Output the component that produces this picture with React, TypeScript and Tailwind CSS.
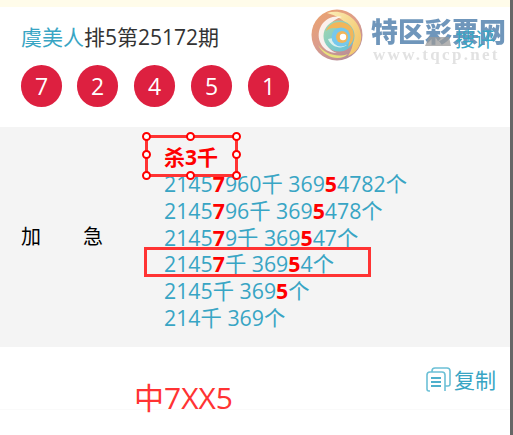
function Logo() {
  return (
    <div className="absolute left-[311px] top-[9px] w-[195px] h-[56px] pointer-events-none blur-[0.4px]">
      <svg width="52" height="52" viewBox="0 0 52 52" className="absolute left-0 top-0">
        <defs>
          <linearGradient id="lg1" x1="0" y1="0" x2="0.6" y2="1">
            <stop offset="0" stopColor="#eda36a" />
            <stop offset="0.55" stopColor="#dc9d8c" />
            <stop offset="1" stopColor="#b88f98" />
          </linearGradient>
          <linearGradient id="lg2" x1="0" y1="0" x2="1" y2="0.7">
            <stop offset="0" stopColor="#fbeeb8" />
            <stop offset="1" stopColor="#f3c76c" />
          </linearGradient>
          <linearGradient id="lg3" x1="0" y1="0" x2="1" y2="1">
            <stop offset="0" stopColor="#a9d8a8" />
            <stop offset="1" stopColor="#5fbfe0" />
          </linearGradient>
        </defs>
        <circle cx="26" cy="26" r="25.5" fill="url(#lg1)" />
        <path d="M16 4 C30 -1 48 8 50 26 C51 36 45 44 37 47 C43 38 44 28 39 19 C34 11 24 6 16 4Z" fill="url(#lg2)" />
        <path d="M7 36 C14 45 26 49 37 45 C30 52 14 50 7 36Z" fill="#e8e27c" />
        <path d="M9 33 C4 20 14 5 31 8 C21 10 13 20 15 32 C16 38 20 42 26 44 C18 44 12 40 9 33Z" fill="#ffffff" opacity="0.85" />
        <circle cx="28" cy="27" r="15.5" fill="url(#lg3)" />
        <path d="M15 22 C18 13 30 10 38 16 C45 22 44 33 37 38 C40 30 37 22 29 20 C23 18 18 19 15 22Z" fill="#f2b65a" />
        <path d="M17 30 C20 38 30 41 36 36 C30 37 24 34 22 29Z" fill="#ffffff" opacity="0.7" />
        <circle cx="30" cy="28" r="9.5" fill="#76c8ec" />
        <circle cx="31" cy="28" r="6" fill="#f0b65a" />
        <circle cx="32" cy="28" r="3.2" fill="#ffffff" />
      </svg>
      <div className="absolute left-[60px] top-[7px] text-[27px] leading-[30px] font-black text-[#6f96bb] whitespace-nowrap font-['Noto_Sans_CJK_SC',sans-serif]">
        特区彩票网
      </div>
      <svg width="26" height="9" viewBox="0 0 26 9" className="absolute left-[114px] top-[28px]">
        <polygon points="4,0 24,0 26,9 0,9" fill="#9a9a9a" opacity="0.75" />
      </svg>
      <div className="absolute left-[62px] top-[37px] text-[17px] leading-[18px] font-bold tracking-[2.3px] text-[#e2e2e2] whitespace-nowrap font-['Liberation_Serif',serif]">
        www.tqcp.net
      </div>
    </div>
  );
}

function Ball({ n, extra }: { n: number; extra?: string }) {
  return (
    <div className={`w-[41px] h-[42px] rounded-full bg-[#dd2040] text-white flex items-center justify-center text-[23px] leading-none ${extra ?? ""}`}>
      {n}
    </div>
  );
}

function Line({ a, r1, b, c, r2, d }: { a: string; r1?: string; b?: string; c: string; r2?: string; d?: string }) {
  return (
    <div className="h-[26.8px] leading-[26.8px] whitespace-nowrap">
      {a}
      {r1 && <b className="text-[#ff0000]">{r1}</b>}
      {b}千 {c}
      {r2 && <b className="text-[#ff0000]">{r2}</b>}
      {d}个
    </div>
  );
}

export default function App() {
  return (
    <div className="relative w-[513px] h-[435px] overflow-hidden bg-white font-['Open_Sans','Noto_Sans_CJK_SC',sans-serif]">
      <div className="h-[7px] bg-[#fffcea]" />
      <div className="pl-[21px] pt-[16px] h-[120px]">
        <div className="h-[29px] leading-[29px] text-[21px] text-[#333333] whitespace-nowrap">
          <span className="text-[#38a5c4]">虞美人</span>排5第25172期
        </div>
        <div className="flex gap-[16px] mt-[13px]">
          <Ball n={7} extra="-mr-px" />
          <Ball n={2} />
          <Ball n={4} />
          <Ball n={5} />
          <Ball n={1} />
        </div>
      </div>
      <div className="h-[220px] bg-[#f4f4f4] flex">
        <div className="w-[143px] flex items-center pl-[21px] gap-[42px] text-black text-[20px]">
          <span>加</span>
          <span>急</span>
        </div>
        <div className="pl-[21px] pt-[17px] text-[#38a5c4] text-[21.3px]">
          <div className="h-[27px] leading-[27px] font-bold text-[#ff0000] text-[21px]">杀3千</div>
          <Line a="2145" r1="7" b="960" c="369" r2="5" d="4782" />
          <Line a="2145" r1="7" b="96" c="369" r2="5" d="478" />
          <Line a="2145" r1="7" b="9" c="369" r2="5" d="47" />
          <Line a="2145" r1="7" c="369" r2="5" d="4" />
          <Line a="2145" c="369" r2="5" />
          <Line a="214" c="369" />
        </div>
      </div>
      <div className="h-[63px] border-b border-[#fafafa] flex justify-between pl-[134px] pr-[17px]">
        <div className="pt-[33px] text-[30px] leading-[36px] text-[#ff3333]">中7XX5</div>
        <div className="pt-[20px] flex items-start text-[#38a5c4] text-[21px] leading-[26px]">
          <svg width="25" height="26" viewBox="0 0 25 26" fill="none" stroke="#6cc0d6" strokeWidth="1.6">
            <path d="M4 24 H3 a2 2 0 0 1 -2 -2 V8 a3 3 0 0 1 3 -3 H16 a3 3 0 0 1 3 3 V24" />
            <path d="M6 5 V4 a3 3 0 0 1 3 -3 H21 a3 3 0 0 1 3 3 V17 a2 2 0 0 1 -2 2 H19" />
            <path d="M5 11 H15 M5 15 H15 M5 19 H15" strokeWidth="2" stroke="#4fb0cc" />
          </svg>
          <span className="ml-[3px]">复制</span>
        </div>
      </div>

      <Logo />
      <div className="absolute left-[455px] top-[26px] text-[20px] leading-[28px] text-[#38a5c4] whitespace-nowrap">搜评</div>

      <div className="absolute left-[145px] top-[135px] w-[93px] h-[42px] border-[3px] border-[#ff3333]">
        <span className="absolute -left-[6px] -top-[6px] w-[9px] h-[9px] rounded-full bg-white border-2 border-[#ff0000]" />
        <span className="absolute left-[38px] -top-[6px] w-[9px] h-[9px] rounded-full bg-white border-2 border-[#ff0000]" />
        <span className="absolute -right-[6px] -top-[6px] w-[9px] h-[9px] rounded-full bg-white border-2 border-[#ff0000]" />
        <span className="absolute -left-[6px] top-[12px] w-[9px] h-[9px] rounded-full bg-white border-2 border-[#ff0000]" />
        <span className="absolute -right-[6px] top-[12px] w-[9px] h-[9px] rounded-full bg-white border-2 border-[#ff0000]" />
        <span className="absolute -left-[6px] -bottom-[6px] w-[9px] h-[9px] rounded-full bg-white border-2 border-[#ff0000]" />
        <span className="absolute left-[38px] -bottom-[6px] w-[9px] h-[9px] rounded-full bg-white border-2 border-[#ff0000]" />
        <span className="absolute -right-[6px] -bottom-[6px] w-[9px] h-[9px] rounded-full bg-white border-2 border-[#ff0000]" />
      </div>
      <div className="absolute left-[144px] top-[247px] w-[227px] h-[30px] border-[3px] border-[#ff3333]" />

      <div className="absolute right-0 top-0 w-[3px] h-full bg-[#666666]" />
    </div>
  );
}
